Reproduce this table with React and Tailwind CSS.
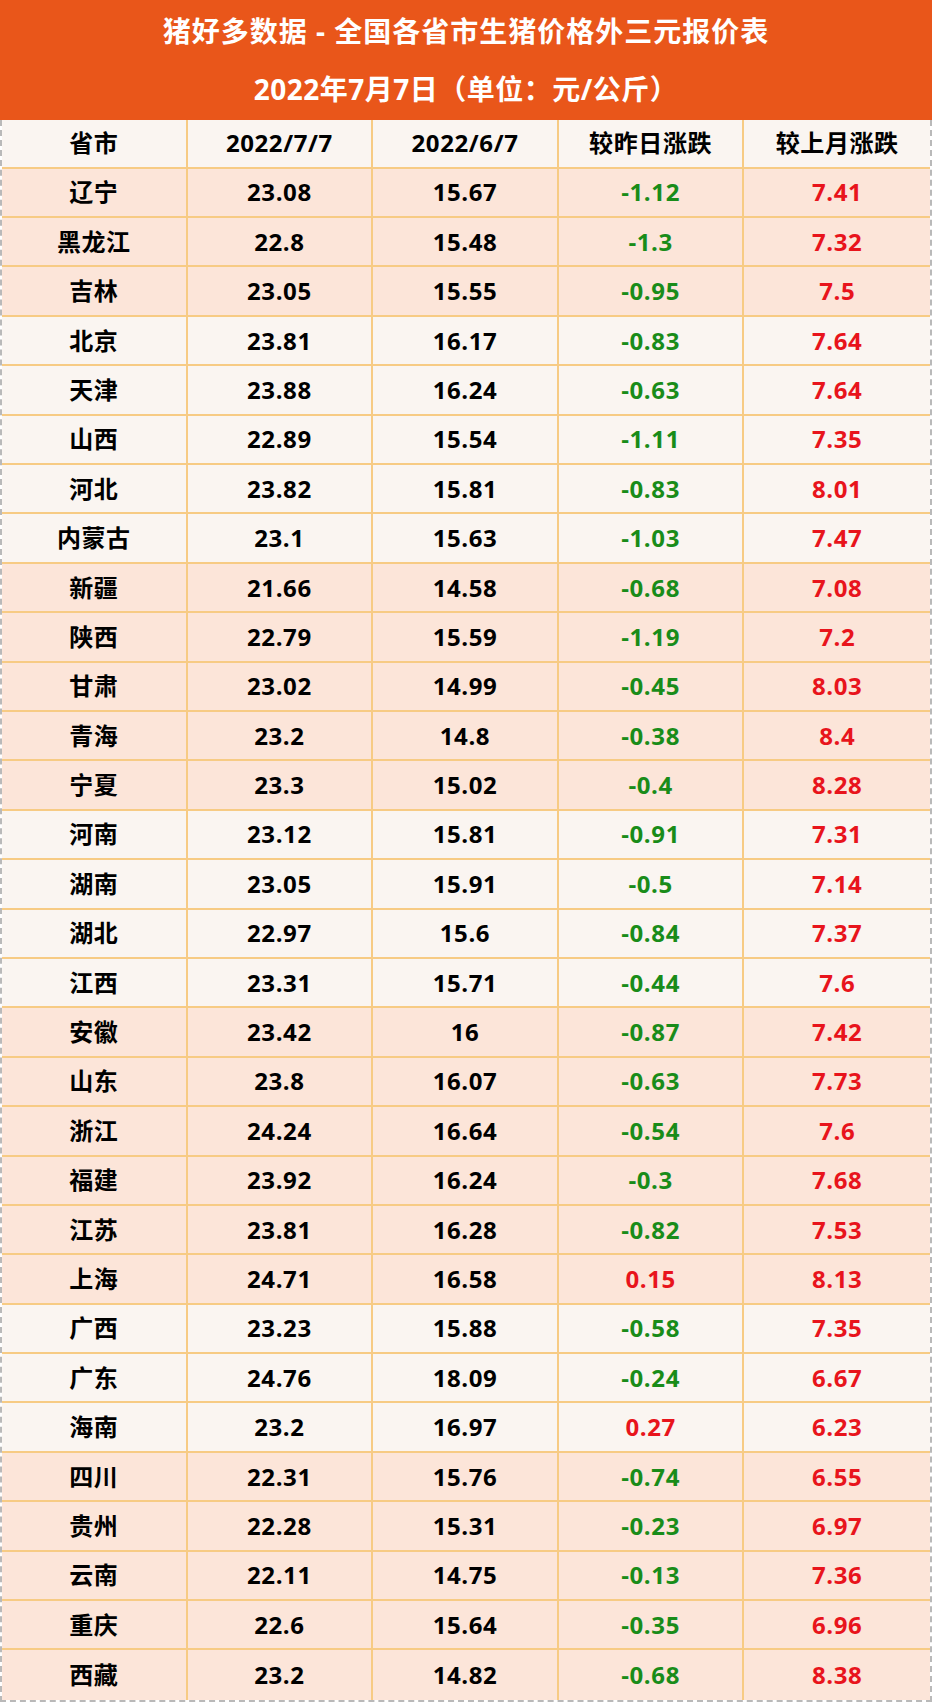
const ROWS = [
  ['辽宁', '23.08', '15.67', '-1.12', '7.41', 0],
  ['黑龙江', '22.8', '15.48', '-1.3', '7.32', 0],
  ['吉林', '23.05', '15.55', '-0.95', '7.5', 0],
  ['北京', '23.81', '16.17', '-0.83', '7.64', 1],
  ['天津', '23.88', '16.24', '-0.63', '7.64', 1],
  ['山西', '22.89', '15.54', '-1.11', '7.35', 1],
  ['河北', '23.82', '15.81', '-0.83', '8.01', 1],
  ['内蒙古', '23.1', '15.63', '-1.03', '7.47', 1],
  ['新疆', '21.66', '14.58', '-0.68', '7.08', 0],
  ['陕西', '22.79', '15.59', '-1.19', '7.2', 0],
  ['甘肃', '23.02', '14.99', '-0.45', '8.03', 0],
  ['青海', '23.2', '14.8', '-0.38', '8.4', 0],
  ['宁夏', '23.3', '15.02', '-0.4', '8.28', 0],
  ['河南', '23.12', '15.81', '-0.91', '7.31', 1],
  ['湖南', '23.05', '15.91', '-0.5', '7.14', 1],
  ['湖北', '22.97', '15.6', '-0.84', '7.37', 1],
  ['江西', '23.31', '15.71', '-0.44', '7.6', 1],
  ['安徽', '23.42', '16', '-0.87', '7.42', 0],
  ['山东', '23.8', '16.07', '-0.63', '7.73', 0],
  ['浙江', '24.24', '16.64', '-0.54', '7.6', 0],
  ['福建', '23.92', '16.24', '-0.3', '7.68', 0],
  ['江苏', '23.81', '16.28', '-0.82', '7.53', 0],
  ['上海', '24.71', '16.58', '0.15', '8.13', 0],
  ['广西', '23.23', '15.88', '-0.58', '7.35', 1],
  ['广东', '24.76', '18.09', '-0.24', '6.67', 1],
  ['海南', '23.2', '16.97', '0.27', '6.23', 1],
  ['四川', '22.31', '15.76', '-0.74', '6.55', 0],
  ['贵州', '22.28', '15.31', '-0.23', '6.97', 0],
  ['云南', '22.11', '14.75', '-0.13', '7.36', 0],
  ['重庆', '22.6', '15.64', '-0.35', '6.96', 0],
  ['西藏', '23.2', '14.82', '-0.68', '8.38', 0],
]

const font = { fontFamily: '"Open Sans", "Noto Sans CJK SC", sans-serif' }

function Cell({ children, last, color = 'text-black' }) {
  return (
    <div className={`flex items-center justify-center text-[24px] font-bold tracking-[0.6px] ${color} ${last ? '' : 'border-r-2 border-[#f7cb84]'}`}>
      {children}
    </div>
  )
}

export default function App() {
  return (
    <div className="w-[932px] h-[1702px] bg-white" style={font}>
      <div className="h-[120px] bg-[#e9561a] flex flex-col text-white font-bold text-[28px]">
        <div className="h-[62px] flex items-center justify-center tracking-[1px]">猪好多数据&nbsp;-&nbsp;全国各省市生猪价格外三元报价表</div>
        <div className="h-[58px] flex items-center justify-center pb-1 tracking-[0.5px]">2022年7月7日（单位：元/公斤）</div>
      </div>
      <div className="h-[1582px] border-x-2 border-b-2 border-dashed border-[#b9b9b9]">
        <div className="h-[48.7px] grid grid-cols-5 bg-[#faf5f1] border-b-2 border-[#f7cb84]">
          <Cell>省市</Cell>
          <Cell>2022/7/7</Cell>
          <Cell>2022/6/7</Cell>
          <Cell>较昨日涨跌</Cell>
          <Cell last>较上月涨跌</Cell>
        </div>
        {ROWS.map(([name, a, b, d, m, light], i) => (
          <div
            key={name}
            className={`h-[49.4px] grid grid-cols-5 ${light ? 'bg-[#faf5f1]' : 'bg-[#fce5d9]'} ${i === ROWS.length - 1 ? '' : 'border-b-2 border-[#f7cb84]'}`}
          >
            <Cell>{name}</Cell>
            <Cell>{a}</Cell>
            <Cell>{b}</Cell>
            <Cell color={d.startsWith('-') ? 'text-[#198c19]' : 'text-[#e8141c]'}>{d}</Cell>
            <Cell last color="text-[#e8141c]">{m}</Cell>
          </div>
        ))}
      </div>
    </div>
  )
}
